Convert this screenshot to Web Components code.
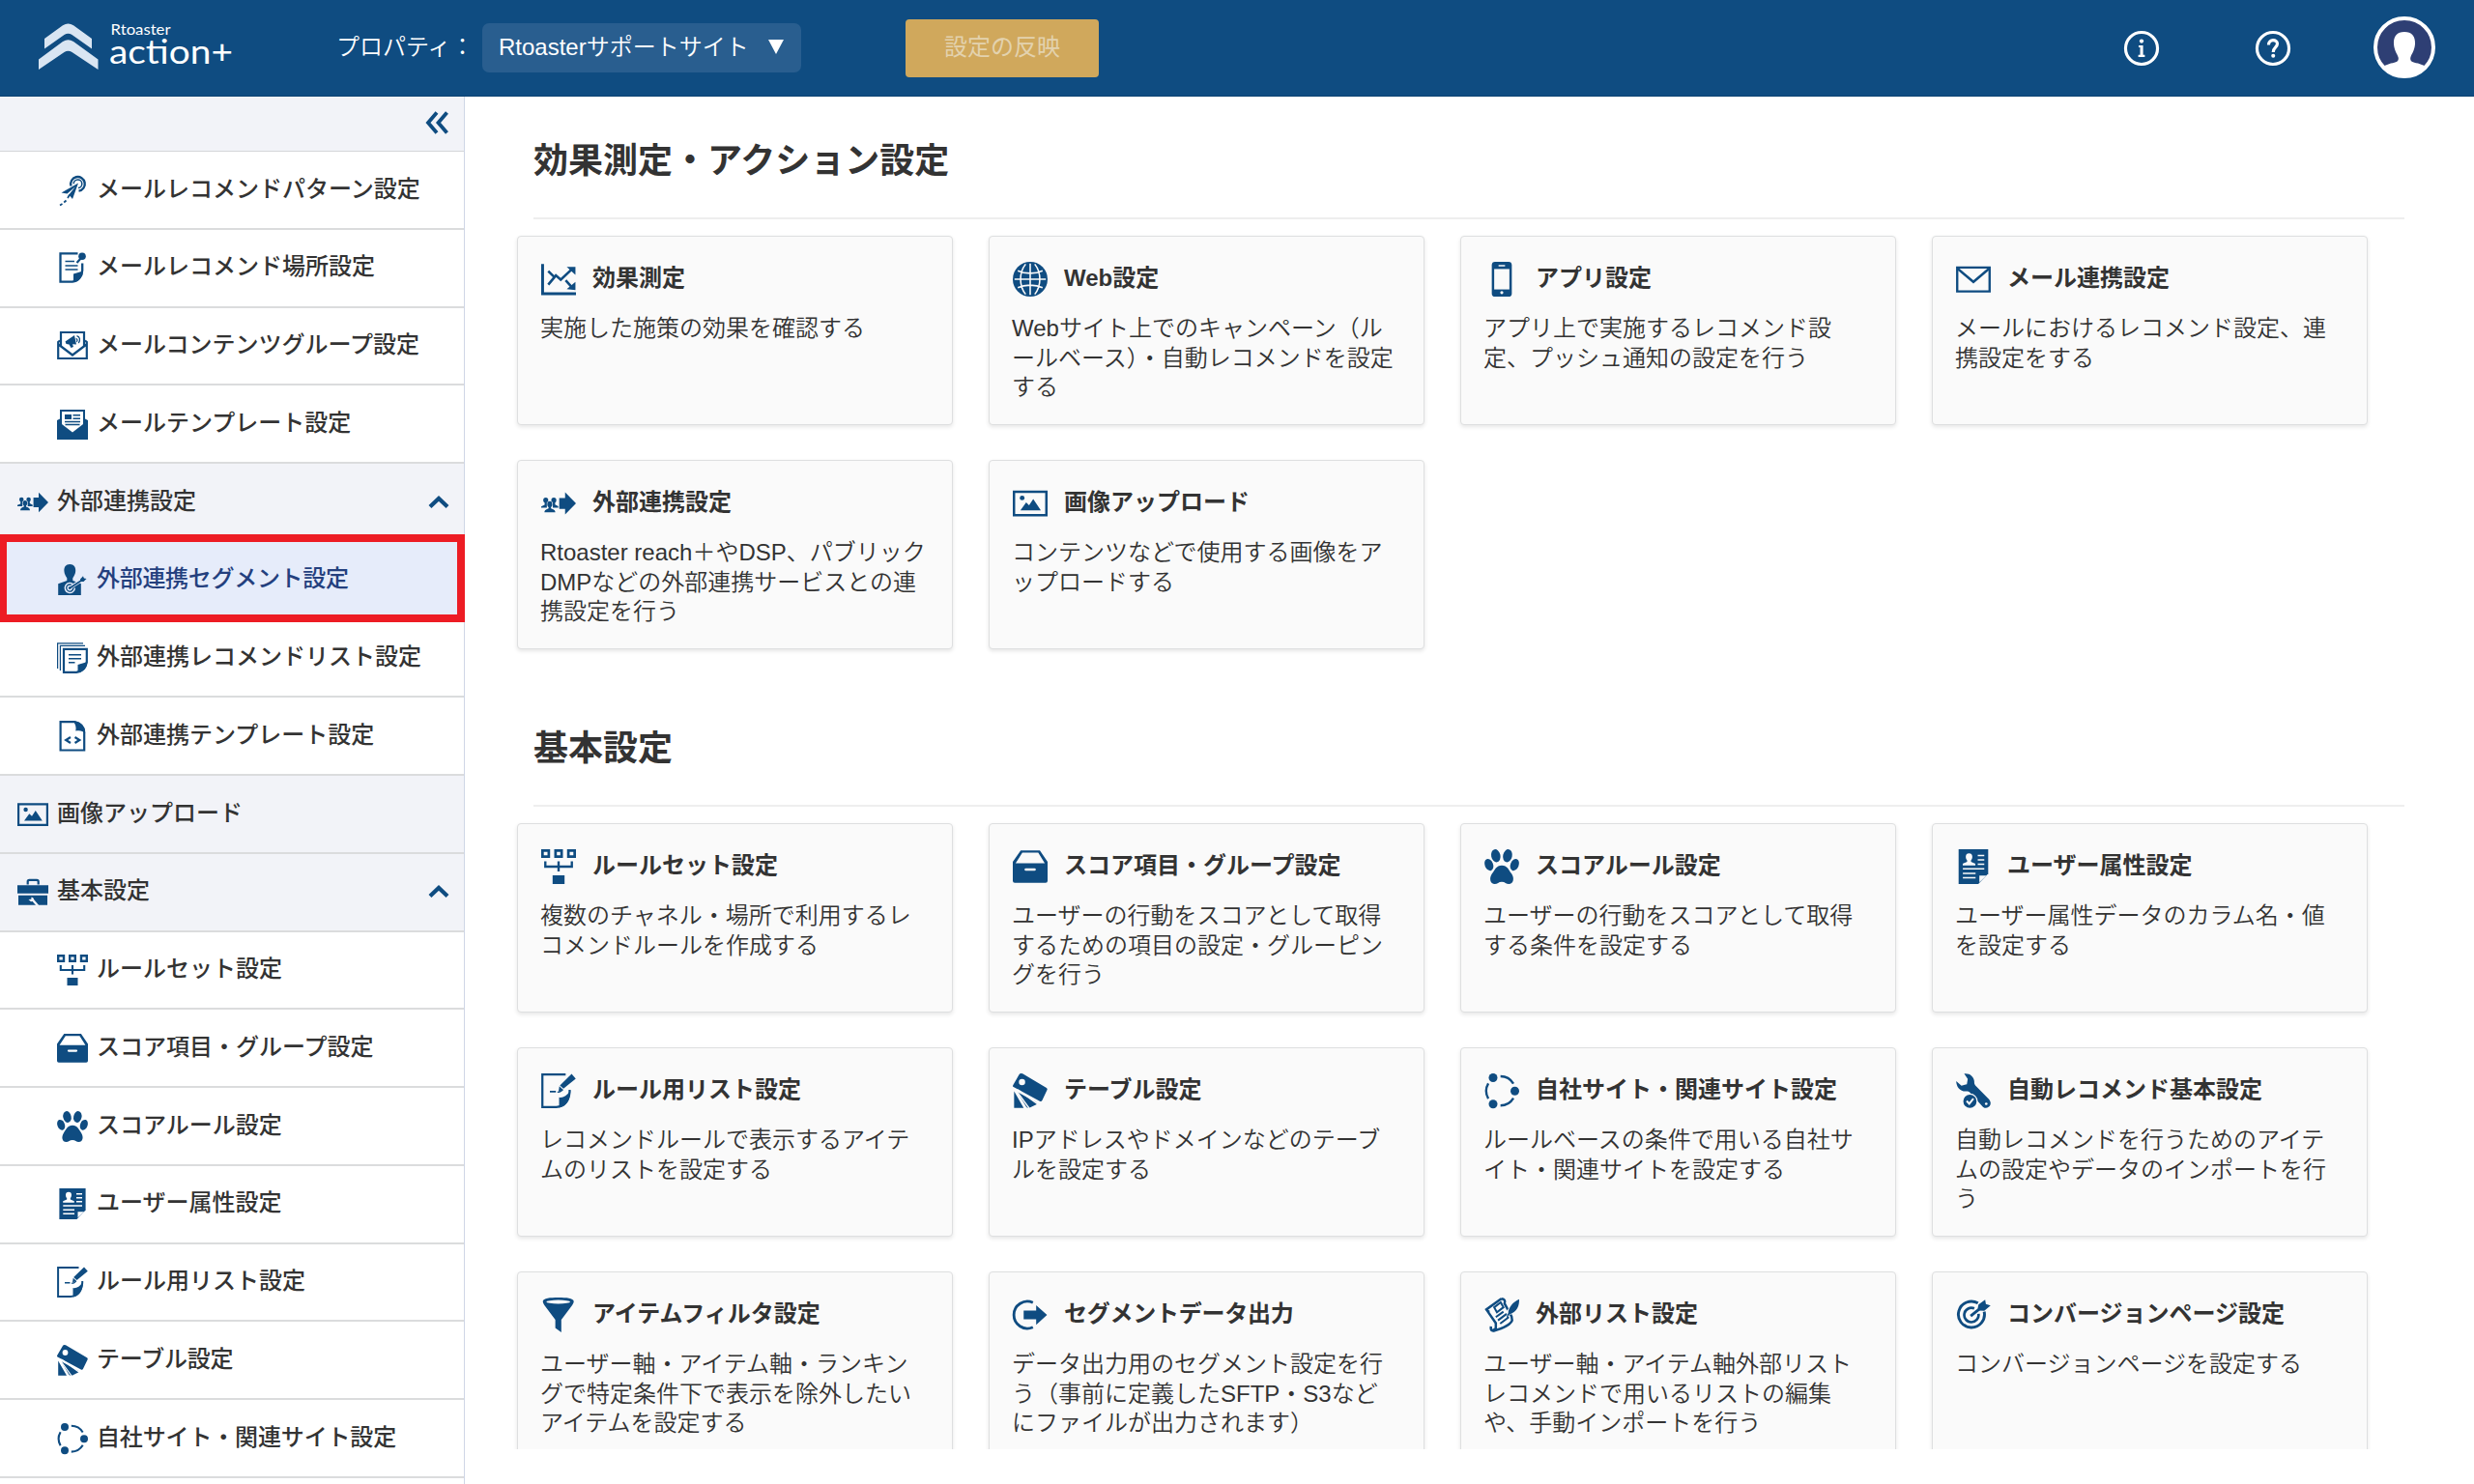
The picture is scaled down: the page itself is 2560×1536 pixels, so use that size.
<!DOCTYPE html>
<html lang="ja">
<head>
<meta charset="utf-8">
<title>Rtoaster action+</title>
<style>
  html, body { margin: 0; height: 100%; overflow: hidden; }
  body {
    background: #fff;
    color: #333;
    font: 24px/31px "Liberation Sans", "Noto Sans CJK JP", sans-serif;
  }
</style>
</head>
<body>
<app-shell>
  <app-header slot="header" property="Rtoasterサポートサイト"></app-header>

  <side-nav slot="nav">
    <nav-item icon="plane">メールレコメンドパターン設定</nav-item>
    <nav-item icon="pin-note">メールレコメンド場所設定</nav-item>
    <nav-item icon="mail-content">メールコンテンツグループ設定</nav-item>
    <nav-item icon="mail-template">メールテンプレート設定</nav-item>
    <nav-item icon="external" parent open>外部連携設定</nav-item>
    <nav-item icon="segment" selected style="--track: -.3px">外部連携セグメント設定</nav-item>
    <nav-item icon="doc-stack">外部連携レコメンドリスト設定</nav-item>
    <nav-item icon="code-doc">外部連携テンプレート設定</nav-item>
    <nav-item icon="image" parent>画像アップロード</nav-item>
    <nav-item icon="toolbox" parent open>基本設定</nav-item>
    <nav-item icon="ruleset">ルールセット設定</nav-item>
    <nav-item icon="drawer">スコア項目・グループ設定</nav-item>
    <nav-item icon="paw">スコアルール設定</nav-item>
    <nav-item icon="profile">ユーザー属性設定</nav-item>
    <nav-item icon="edit">ルール用リスト設定</nav-item>
    <nav-item icon="tags" style="--track: -.2px">テーブル設定</nav-item>
    <nav-item icon="network" style="--track: -.15px">自社サイト・関連サイト設定</nav-item>
  </side-nav>

  <card-section heading="効果測定・アクション設定">
    <menu-card icon="chart" heading="効果測定">実施した施策の効果を確認する</menu-card>
    <menu-card icon="globe" heading="Web設定">Webサイト上でのキャンペーン（ル<br>ールベース）・自動レコメンドを設定<br>する</menu-card>
    <menu-card icon="phone" heading="アプリ設定">アプリ上で実施するレコメンド設<br>定、プッシュ通知の設定を行う</menu-card>
    <menu-card icon="mail" heading="メール連携設定">メールにおけるレコメンド設定、連<br>携設定をする</menu-card>
    <menu-card icon="external" heading="外部連携設定">Rtoaster reach＋やDSP、パブリック<br>DMPなどの外部連携サービスとの連<br>携設定を行う</menu-card>
    <menu-card icon="image" heading="画像アップロード">コンテンツなどで使用する画像をア<br>ップロードする</menu-card>
  </card-section>

  <card-section heading="基本設定">
    <menu-card icon="ruleset" heading="ルールセット設定">複数のチャネル・場所で利用するレ<br>コメンドルールを作成する</menu-card>
    <menu-card icon="drawer" heading="スコア項目・グループ設定">ユーザーの行動をスコアとして取得<br>するための項目の設定・グルーピン<br>グを行う</menu-card>
    <menu-card icon="paw" heading="スコアルール設定">ユーザーの行動をスコアとして取得<br>する条件を設定する</menu-card>
    <menu-card icon="profile" heading="ユーザー属性設定">ユーザー属性データのカラム名・値<br>を設定する</menu-card>
    <menu-card icon="edit" heading="ルール用リスト設定">レコメンドルールで表示するアイテ<br>ムのリストを設定する</menu-card>
    <menu-card icon="tags" heading="テーブル設定">IPアドレスやドメインなどのテーブ<br>ルを設定する</menu-card>
    <menu-card icon="network" heading="自社サイト・関連サイト設定">ルールベースの条件で用いる自社サ<br>イト・関連サイトを設定する</menu-card>
    <menu-card icon="wrench" heading="自動レコメンド基本設定">自動レコメンドを行うためのアイテ<br>ムの設定やデータのインポートを行<br>う</menu-card>
    <menu-card icon="filter" heading="アイテムフィルタ設定">ユーザー軸・アイテム軸・ランキン<br>グで特定条件下で表示を除外したい<br>アイテムを設定する</menu-card>
    <menu-card icon="export" heading="セグメントデータ出力" style="--track: -.25px">データ出力用のセグメント設定を行<br>う（事前に定義したSFTP・S3など<br>にファイルが出力されます）</menu-card>
    <menu-card icon="scroll" heading="外部リスト設定">ユーザー軸・アイテム軸外部リスト<br>レコメンドで用いるリストの編集<br>や、手動インポートを行う</menu-card>
    <menu-card icon="target" heading="コンバージョンページ設定">コンバージョンページを設定する</menu-card>
  </card-section>
</app-shell>

<script>
// All icons share a 32x32 box. .l is a stroked line, .w / .wl are knocked out
// in the background colour.
const icons = {
  plane: `
    <path class="l" stroke-width="2.4" d="M14.5 11.5A7.3 7.3 0 1 1 22.5 16.6"/>
    <path class="l" stroke-width="1.5" d="M17.2 9.2A4.3 4.3 0 1 1 22 13.5"/>
    <path d="M22 8.4 4.5 18.4 10.5 19.6 19 12.2 12.3 20.5 16 25Z"/>
    <path class="l" stroke-width="1.7" d="m13 20.5-2 3.5M9.5 26.5l-2.3 2M5.5 30l-2.5 1.5"/>`,
  "pin-note": `
    <path class="l" stroke-width="2.3" d="M21.5 1.4H3.5V30.6H16C22 30 26 25 26.2 19V11.5"/>
    <path d="M17 31V22.5L27 19.5C26.5 26 22.5 30.5 17 31Z"/>
    <circle cx="26" cy="4.2" r="3.8"/><path class="l" stroke-width="2.2" d="m25 6-4.5 5"/>
    <path class="l" stroke-width="1.4" d="M8.5 9.5H18M8.5 14H21.5M8.5 18H21.5"/>`,
  "mail-content": `
    <path class="l" stroke-width="2.2" d="M4 16V2H28V16M3 10.5 1.2 12V29H30.8V12L29 10.5M1.5 14.5 16 25.5 30.5 14.5"/>
    <path d="M8.5 11.5 18 5 20 14.5 16 14.2 17 17 14.5 18 12.5 14.5 9.5 14Z"/>
    <path class="l" stroke-width="1.3" d="M19.6 8.5c1.6.4 1.8 2.4.7 3.2M20.5 5.6c3.4 1 3.8 4.6 1.8 7.4"/>`,
  "mail-template": `
    <path d="M3 10.5V1H29V10.5L32 12V32H0V12Z"/>
    <path class="w" d="M5 3H27V16L16 24.5 5 16Z"/>
    <path d="M8 6H15V11H8Z"/>
    <path class="l" stroke-width="1.4" d="M16.5 6.7H24M16.5 10.3H24M8 13.5H24M8.5 16.5H23.5"/>`,
  external: `
    <path d="M16.6 11H22V5.8L32 16 22 26.3V21H16.6Z"/>
    <circle cx="4.2" cy="13" r="2.3"/><circle cx="11.6" cy="13" r="2.3"/>
    <path d="M3.2 14H5.5V17L7 18V20H0V18.8L3.2 17.4ZM10.4 14H12.8V17L15.7 18.6V20H9V18Z"/>
    <path class="w" d="M5.2 14.8H10.7V21H5.2Z"/>
    <ellipse cx="7.9" cy="16.8" rx="2.3" ry="2.8"/><path d="M6.8 18H9V20.6C11 21.5 13 21.8 13 24.2H3C3 21.8 5 21.5 6.8 20.6Z"/>`,
  segment: `
    <path d="M13.3 0C17.5 0 19.4 3 19.2 7 19 10.5 17.6 12 16.3 14.2V17L24.8 20V32H1.2V20.2L10.3 17V14.2C9 12 7.6 10.5 7.4 7 7.2 3 9 0 13.3 0Z"/>
    <path class="wl" stroke-width="1.5" d="M17 21.2A5 5 0 1 0 18.3 24.5M13 24.5"/>
    <circle class="wl" cx="13.2" cy="24.6" r="2.1" stroke-width="1.4"/>
    <path class="wl" stroke-width="3.5" d="M15 23.2 27 15.5"/>
    <path class="l" stroke-width="1.6" d="M13.5 24.5 28 15"/><path d="M24 15.5 27 12.3 27.8 14.5 30.5 15 27.5 18H24.5Z"/>`,
  "doc-stack": `
    <path class="l" stroke-width="1.2" d="M.6 27V.8H27M3.4 29V3.4H29"/>
    <path class="l" stroke-width="2.2" d="M7 6.8H30.8V20C30 26 26 30 20 30.8H7Z"/>
    <path d="M21.5 31V23L31.5 20C30.5 27 27 30.5 21.5 31Z"/>
    <path class="l" stroke-width="1.5" d="M12 12.7H25M12 16.8H25M12 20.7H18.5"/>`,
  "code-doc": `
    <path class="l" stroke-width="2.2" d="M3.6 1.2H18C24 2.5 28 6.5 28.2 12V30.5H3.6Z"/>
    <path d="M16.5.2C24 .5 29 5.5 29.2 13 26.5 10 23 9.8 19.3 10.5 20.2 6.5 19 3 16.5.2Z"/>
    <path class="l" stroke-width="2.2" d="m14 17-4.8 3 4.8 3M18.5 17l4.8 3-4.8 3"/>`,
  image: `
    <path class="l" stroke-width="2.2" d="M1.1 5.3H30.9V26.9H1.1Z"/>
    <circle cx="8.6" cy="11" r="2.2"/>
    <path d="M7 22.5 12.3 15.2 15 17.8 18.8 12 25.8 22.5Z"/>`,
  toolbox: `
    <path class="l" stroke-width="2.2" d="M10.7 8.5V5.5Q10.7 3.8 12.4 3.8H20Q21.7 3.8 21.7 5.5V8.5"/>
    <path d="M0 9.2H32V17.8H0ZM1 19.8H31V29.8H1Z"/>
    <path class="wl" stroke-width="2.4" d="m15.5 24 6 7"/><path class="w" d="M14.5 21.5Q17.5 22 17 25.5L14 26.3 11.5 24 14.3 23.7Z"/>`,
  ruleset: `
    <path class="l" stroke-width="2.4" d="M1.2 1.2H7V6.8H1.2ZM13.2 1.2H18.8V6.8H13.2ZM25 1.2H30.8V6.8H25Z"/>
    <path class="l" stroke-width="2.1" d="M3.8 11V16H28.2V11M16 11V20.5"/>
    <path d="M10.5 24H21.5V32H10.5Z"/>`,
  drawer: `
    <path fill-rule="evenodd" d="M7.3 1H24.9L32 11.5V29Q32 30.8 30.2 30.8H1.8Q0 30.8 0 29V11.5ZM8.8 3.2 2.6 12.8H29.4L23.4 3.2Z"/>
    <path class="wl" stroke-width="2.3" stroke-linecap="round" d="M12 18.6H20"/>`,
  paw: `
    <ellipse cx="10.5" cy="6" rx="4.2" ry="6" transform="rotate(-12 10.5 6)"/>
    <ellipse cx="21.3" cy="6" rx="4.2" ry="6" transform="rotate(12 21.3 6)"/>
    <ellipse cx="4.2" cy="14.3" rx="3.8" ry="5.6" transform="rotate(-22 4.2 14.3)"/>
    <ellipse cx="27.8" cy="14.3" rx="3.8" ry="5.6" transform="rotate(22 27.8 14.3)"/>
    <path d="M16 14.8C21 14.8 22.5 19 25 22.5 28 27 26.5 32 22.5 32 20 32 19 30 16 30S12 32 9.5 32C5.5 32 4 27 7 22.5 9.5 19 11 14.8 16 14.8Z"/>`,
  profile: `
    <path d="M2.4 0H29.6V22.5L20.5 32H2.4Z"/>
    <path class="w" d="M12 3.8C16.2 3.8 15.2 9 13.8 10.2V11.5L17.8 13.3V14.8H6.2V13.3L10.2 11.5V10.2C8.8 9 7.8 3.8 12 3.8Z"/>
    <path class="wl" stroke-width="1.4" d="M20 5.8H26M20 9.8H26M20 13.8H26M6.3 18H26M6.3 22.2H18M6.3 26.2H18"/>
    <path class="w" d="M21.5 30.5V24.2H28Z"/>`,
  edit: `
    <path class="l" stroke-width="2" d="M22.5 1.1H1.1V30.9H14C21 30.5 25.5 25 26.2 17V15"/>
    <path d="M16.5 31.5V22C19.5 22.8 23.5 21 26.8 16 27 25 23 30.5 16.5 31.5Z"/>
    <path d="M28 .5 31.8 4.8 20.5 14 17.2 11Z"/>
    <path d="m16.7 11.8 3.3 3-4 1.8ZM8 16h5.5v1.5H8Z"/>
    <path class="l" stroke-width="1.3" d="M15 17c2 1 3-1 5-2"/>`,
  tags: `
    <path fill-rule="evenodd" d="M9 .3 31 13.3Q32.2 14 31.6 15.2L27 24.8Q26.3 26.3 24.8 25.5L.6 12.5Q-.3 12 .1 11L5.8 1.2Q6.8-.6 9 .3ZM8.5 5.1A2.9 2.9 0 1 0 8.5 10.9 2.9 2.9 0 1 0 8.5 5.1Z"/>
    <path d="M1.2 16.5 10 31.8H1.2ZM4.2 17 21.5 26.5 22.5 28.2 16 31.4Q13.5 32.4 12.3 30.7Z"/>
    <path class="wl" stroke-width="1.2" d="M3 15.5 15 32M4.5 15 24 29"/>`,
  network: `
    <circle cx="8" cy="4" r="4"/><circle cx="28" cy="16.2" r="4"/><circle cx="8" cy="28.2" r="4"/>
    <path class="l" stroke-width="2.1" d="M14.8 2.7A14 14 0 0 1 26.7 9.5M26.7 22.8A14 14 0 0 1 14.8 29.6M3.6 9.2A14 14 0 0 0 3.6 23.2"/>`,
  chart: `
    <path class="l" stroke-width="2.6" d="M1.3 2V29.4H32"/>
    <path class="l" stroke-width="2.3" d="m6.5 21 7-8.5 4.5 4L28 7M6.5 8.5l5 5M22.5 17l5 5.5"/>
    <path d="M23.5 4.7H31.5V12ZM31.5 18.5V26L23.5 25Z"/>`,
  globe: `
    <circle cx="16" cy="16" r="16"/>
    <path class="wl" stroke-width="1.4" d="M16 1.5V30.5M1.6 16H30.4M4.6 8.2C11 11.3 21 11.3 27.4 8.2M4.6 23.8C11 20.7 21 20.7 27.4 23.8M11.8 2.1C5.6 10 5.6 22 11.8 29.9M20.2 2.1C26.4 10 26.4 22 20.2 29.9"/>`,
  phone: `
    <rect x="6.8" width="18.4" height="32" rx="3"/>
    <path class="w" d="M9 6.6H23V25.4H9Z"/>
    <path class="wl" stroke-width="1.3" stroke-linecap="round" d="M13.5 3.5H18.5"/><circle class="w" cx="16" cy="28.3" r="1.4"/>`,
  mail: `
    <path class="l" stroke-width="2.1" d="M1.1 5.2H30.9V27.2H1.1Z"/>
    <path class="l" stroke-width="2.2" d="M1.5 6.2 16 18.5 30.5 6.2"/>`,
  wrench: `
    <path d="M7.5.2C12.5-.5 17.2 3 16.8 8.5Q16.8 9.8 17.8 11L30.5 24Q33 27.2 30.8 30.3 28 33.2 24.8 30.8L12.3 17Q11.3 16.3 10 16.5C4 17 .2 12.5.2 7L5 11.3 10 10 10.8 5.2Z"/>
    <circle class="w" cx="27.8" cy="28" r="1.2"/>
    <circle class="w" cx="12.8" cy="25.7" r="7.2"/><circle cx="12.8" cy="25.7" r="6.1"/>
    <path class="wl" stroke-width="1.8" d="m9.8 25.4 2.4 2.5 3.8-4.6"/>`,
  filter: `
    <path d="M1.5 3.5C2 .5 8 0 15.7 0S29.5.5 30 3.5Q30 5 28.5 7L18.5 20.5V32L13 28V20.5L3 7Q1.5 5 1.5 3.5Z"/>
    <ellipse class="w" cx="15.7" cy="4" rx="11" ry="1.7"/>`,
  export: `
    <path class="l" stroke-width="2.5" d="M18.5 4.7A12.4 12.4 0 1 0 18.5 27.3"/>
    <path d="M10 12H21.5V7L31.5 16 21.5 25V20H10Z"/>`,
  scroll: `
    <path class="l" stroke-width="2.2" d="M15.5 1.2 1.8 11 10.5 23.5V28.5L7.5 30.5Q5.5 30 6 26.5M1.5 11 4.5 13.3M15.5 1.2Q20 1.5 18.5 5.5L25 17.5 25.5 21Q24 26 8 31"/>
    <path class="l" stroke-width="1.8" d="m9 9 6-4.5 2.5 4.5-6 4.5ZM10.5 18l7-5M12.5 21l8-6M14.5 24l8-6"/>
    <path class="wl" stroke-width="5" d="M22 14.5 31 2"/>
    <path d="M32 1.5C32 8 30.5 12.5 23 15.5L20.8 19 20.5 17.5 22 14C22 9.5 26 4 32 1.5Z"/>`,
  target: `
    <path class="l" stroke-width="2.6" d="M20.2 5.2A12 12 0 1 0 25.9 13"/>
    <path class="l" stroke-width="2.4" d="M16.8 10A6.6 6.6 0 1 0 20.7 15"/>
    <path class="l" stroke-width="2.6" d="M13.5 17 24 8.5"/>
    <path d="M20 10 20.7 6.5 26.8 2 27.5 6 31.8 7.3 26 12.2 21.5 12Z"/>`,
  collapse: `<path class="l" stroke-width="3.8" d="M16 5.5 7 16 16 26.5M26.5 5.5 17.5 16 26.5 26.5"/>`,
  up: `<path class="l" stroke-width="4.2" d="m7 20.5 9-8.5 9 8.5"/>`,
  info: `
    <circle class="l" cx="16" cy="16" r="14.7" stroke-width="2.8"/>
    <circle cx="16" cy="9.4" r="1.9"/><path d="M13.3 13.3H17.4V22H19V24H13V22H14.7V15.1H13.3Z"/>`,
  help: `
    <circle class="l" cx="16" cy="16" r="14.7" stroke-width="2.8"/>
    <path class="l" stroke-width="2.8" d="M12 12.8C12 7.2 20 7.4 20 11.8 20 15 16.2 15 16.2 19.5"/><circle cx="16.2" cy="22.9" r="1.8"/>`,
};

function define(name, html, update) {
  const template = document.createElement("template");
  template.innerHTML = html;
  customElements.define(
    name,
    class extends HTMLElement {
      static observedAttributes = ["name", "icon", "heading", "property"];
      constructor() {
        super();
        this.attachShadow({ mode: "open" }).append(template.content.cloneNode(true));
      }
      attributeChangedCallback() {
        update?.(this, (s) => this.shadowRoot.querySelector(s));
      }
    }
  );
}

define(
  "app-icon",
  `<style>
    :host { display: block; flex: none; width: 32px; height: 32px; color: #0f4c81; }
    svg { display: block; width: 100%; height: 100%; overflow: visible; fill: currentColor; }
    .l { fill: none; stroke: currentColor; }
    .w { fill: var(--icon-bg, #fff); }
    .wl { fill: none; stroke: var(--icon-bg, #fff); }
  </style>
  <svg viewBox="0 0 32 32"></svg>`,
  (el, $) => ($("svg").innerHTML = icons[el.getAttribute("name")] ?? "")
);

define(
  "app-logo",
  `<style>
    :host { display: block; width: 210px; height: 60px; }
    svg { display: block; font-family: Lato, sans-serif; fill: #fff; }
  </style>
  <svg width="210" height="60" viewBox="0 0 210 60">
    <g fill="#d9e5f2">
      <path d="M6 21V31.5L26.5 17Q30.5 14.5 34.5 17L55 31.5V21L36 7.2Q30.5 3.6 25 7.2Z"/>
      <path d="M0 42.5V53L26.5 35Q30.5 32.3 34.5 35L61.5 53V42.5L36 24Q30.5 20.3 25 24Z"/>
    </g>
    <text x="74.5" y="17.3" font-size="15" textLength="62" lengthAdjust="spacingAndGlyphs">Rtoaster</text>
    <text x="73" y="47.3" font-size="35" textLength="128" lengthAdjust="spacingAndGlyphs">action+</text>
  </svg>`
);

define(
  "user-avatar",
  `<style>
    :host { display: block; width: 64px; height: 64px; }
    svg { display: block; }
  </style>
  <svg width="64" height="64" viewBox="0 0 64 64">
    <circle cx="32" cy="32" r="30" fill="#2e3f74"/>
    <path fill="#fff" d="M32 16C39.5 16 43.5 20.5 43 28.5 42.5 35.5 39.5 38.5 38.3 42.5 37.5 46.5 40.5 47.5 46 48.6L54 51.5Q45 62 32 62T10 51.5L18 48.6C23.5 47.5 26.5 46.5 25.7 42.5 24.5 38.5 21.5 35.5 21 28.5 20.5 20.5 24.5 16 32 16Z"/>
    <circle cx="32" cy="32" r="30" fill="none" stroke="#fff" stroke-width="4"/>
  </svg>`
);

define(
  "app-header",
  `<style>
    :host {
      display: flex; align-items: center; box-sizing: border-box; height: 100px;
      padding: 0 40px; background: #0f4c81; border-bottom: 1px solid #0c4272; color: #fff;
    }
    app-logo { margin: -1px 98px 0 0; }
    .label { width: 151px; white-space: nowrap; margin-top: -2px; font-weight: 350; }
    .select {
      box-sizing: border-box; display: flex; align-items: center; justify-content: space-between;
      width: 330px; height: 51px; padding: 0 18px 2px 17px; border-radius: 7px; background: #295e8f;
      white-space: nowrap; font-weight: 350;
    }
    .select i { width: 0; border: 8.5px solid transparent; border-top: 15px solid #fff; border-bottom: 0; }
    button {
      width: 200px; height: 60px; margin: 0 auto 0 108px; padding: 0 0 3px; border: 0; border-radius: 4px;
      background: #d0a85c; color: #e3d2ae; font: inherit;
    }
    app-icon { width: 36px; height: 36px; color: #fff; margin-right: 100px; }
    app-icon + app-icon { margin-right: 86px; }
    user-avatar { margin: -2px 0 0; }
  </style>
  <app-logo></app-logo>
  <span class="label">プロパティ：</span>
  <div class="select"><span></span><i></i></div>
  <button>設定の反映</button>
  <app-icon name="info"></app-icon>
  <app-icon name="help"></app-icon>
  <user-avatar></user-avatar>`,
  (el, $) => ($(".select span").textContent = el.getAttribute("property"))
);

define(
  "side-nav",
  `<style>
    :host {
      display: flex; flex-direction: column; box-sizing: border-box; width: 481px;
      border-right: 1px solid #cfd6e6; background: #fff;
    }
    .toggle {
      display: flex; align-items: center; justify-content: flex-end; box-sizing: border-box;
      height: 57.2px; flex: none; padding: 0 12px 3px 0; background: #f2f3f8; border-bottom: 1px solid #d4d6d8;
    }
  </style>
  <div class="toggle"><app-icon name="collapse"></app-icon></div>
  <slot></slot>`
);

define(
  "nav-item",
  `<style>
    :host {
      position: relative; display: flex; align-items: center; flex: none; box-sizing: border-box;
      height: 80.75px; padding: 0 10px 0 59px; border-bottom: 2px solid #dbdcdd;
      font-weight: 500; white-space: nowrap;
    }
    :host([parent]) { padding-left: 18px; background: #f2f3f8; --icon-bg: #f2f3f8; }
    :host([selected]) { background: #e6ecfa; color: #24407e; --icon-bg: #e6ecfa; }
    /* highlight frame, overlaps the neighbouring rows */
    :host([selected])::after {
      content: ""; position: absolute; z-index: 1; inset: -8px -1px -4px 0;
      border: 8px solid #ed1c24; border-left-width: 7px;
    }
    span { flex: 1; margin: -3px 0 0 9px; letter-spacing: var(--track, 0); }
    .arrow { display: none; }
    :host([open]) .arrow { display: block; }
  </style>
  <app-icon class="icon"></app-icon>
  <span><slot></slot></span>
  <app-icon class="arrow" name="up"></app-icon>`,
  (el, $) => $(".icon").setAttribute("name", el.getAttribute("icon"))
);

define(
  "menu-card",
  `<style>
    :host {
      display: block; box-sizing: border-box; height: 196px; padding: 26px 22px 0 23px;
      background: #fafafa; border: 1px solid #dedfe0; border-radius: 4px;
      box-shadow: 0 2px 4px rgba(0, 0, 0, .1); --icon-bg: #fafafa; white-space: nowrap;
    }
    header { display: flex; align-items: center; gap: 17.5px; height: 36px; padding-left: .5px; }
    app-icon { width: 36px; height: 36px; }
    h3 { margin: -3px 0 0; font-size: 24px; font-weight: bold; letter-spacing: var(--track, 0); }
    p { margin: 18px 0 0; line-height: 30.7px; font-weight: 350; }
  </style>
  <header><app-icon></app-icon><h3></h3></header>
  <p><slot></slot></p>`,
  (el, $) => {
    $("app-icon").setAttribute("name", el.getAttribute("icon"));
    $("h3").textContent = el.getAttribute("heading");
  }
);

define(
  "card-section",
  `<style>
    :host { display: block; height: 608px; }
    h2 {
      box-sizing: border-box; height: 83px; margin: 0 0 17px 17px; border-bottom: 2px solid #eee;
      font-size: 36px; line-height: 46px; font-weight: bold;
    }
    .grid { display: grid; grid-template-columns: repeat(4, 451px); gap: 36px 37px; }
  </style>
  <h2></h2>
  <div class="grid"><slot></slot></div>`,
  (el, $) => ($("h2").textContent = el.getAttribute("heading"))
);

define(
  "app-shell",
  `<style>
    :host { display: grid; grid-template: 100px 1436px / 481px 1fr; height: 1536px; overflow: hidden; }
    .top { grid-column: 1 / -1; }
    nav { overflow: hidden; }
    ::slotted(side-nav) { height: 100%; }
    main { box-sizing: border-box; height: 1400px; padding: 44px 72px 0 54px; overflow: hidden; }
  </style>
  <div class="top"><slot name="header"></slot></div>
  <nav><slot name="nav"></slot></nav>
  <main><slot></slot></main>`
);
</script>
</body>
</html>
